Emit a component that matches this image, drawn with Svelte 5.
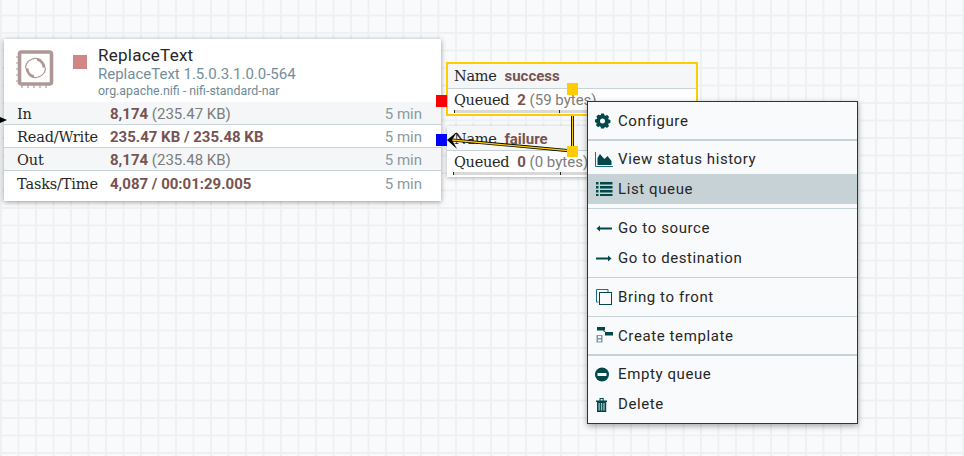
<script>
  const stats = [
    { label: 'In', value: '8,174', extra: '(235.47 KB)' },
    { label: 'Read/Write', value: '235.47 KB / 235.48 KB', extra: '' },
    { label: 'Out', value: '8,174', extra: '(235.48 KB)' },
    { label: 'Tasks/Time', value: '4,087 / 00:01:29.005', extra: '' }
  ];

  const groups = [
    [{ icon: 'gear', text: 'Configure' }],
    [{ icon: 'chart', text: 'View status history' }, { icon: 'list', text: 'List queue', active: true }],
    [{ icon: 'left', text: 'Go to source' }, { icon: 'right', text: 'Go to destination' }],
    [{ icon: 'front', text: 'Bring to front' }],
    [{ icon: 'template', text: 'Create template' }],
    [{ icon: 'empty', text: 'Empty queue' }, { icon: 'trash', text: 'Delete' }]
  ];
</script>

<div class="canvas">
  <section class="processor">
    <header class="proc-head">
      <svg class="proc-icon" width="38" height="42" viewBox="0 0 38 42">
        <rect x="3.500" y="3" width="32" height="32" rx="2" fill="none" stroke="#ad9897" stroke-width="3.600" />
        <path d="M9.500 19a10 10 0 0 1 16-7.500" fill="none" stroke="#ad9897" stroke-width="1.200" />
        <path d="M29.500 19a10 10 0 0 1-16 7.500" fill="none" stroke="#ad9897" stroke-width="1.200" />
        <path d="M21 9.200a10 10 0 0 1 8.500 9.800l-3-.5a7.500 7.500 0 0 0-5.500-6.800z" fill="#ad9897" />
        <path d="M18 28.800a10 10 0 0 1-8.500-9.800l3 .5a7.500 7.500 0 0 0 5.500 6.800z" fill="#ad9897" />
        <path d="M0 8h2M0 14h2M0 20h2M0 26h2M0 32h2M6 36v3M12 36v3M18 36v3M24 36v3M30 36v3" stroke="#ad9897" stroke-width="1.200" />
      </svg>
      <span class="run-state"></span>
      <div class="names">
        <div class="proc-name">ReplaceText</div>
        <div class="proc-type">ReplaceText 1.5.0.3.1.0.0-564</div>
        <div class="proc-bundle">org.apache.nifi - nifi-standard-nar</div>
      </div>
    </header>
    {#each stats as s, i}
      <div class="stat" class:odd={i % 2 === 0}>
        <span class="stat-label">{s.label}</span>
        <span class="stat-value"><b>{s.value}</b>{#if s.extra}&nbsp;<span class="extra">{s.extra}</span>{/if}</span>
        <span class="stat-time">5 min</span>
      </div>
    {/each}
  </section>

  <section class="conn success">
    <div class="conn-row head"><span class="conn-label">Name</span><b>success</b></div>
    <div class="conn-row body">
      <span class="conn-label">Queued</span><b>2</b>&nbsp;<span class="extra">(59 bytes)</span>
      <div class="bars"><i></i><i></i></div>
    </div>
  </section>

  <section class="conn failure">
    <div class="conn-row head"><span class="conn-label">Name</span><b>failure</b></div>
    <div class="conn-row body">
      <span class="conn-label">Queued</span><b>0</b>&nbsp;<span class="extra">(0 bytes)</span>
      <div class="bars"><i></i><i></i></div>
    </div>
  </section>

  <svg class="wires" width="600" height="200" viewBox="0 0 600 200">
    <path d="M572.500 116V151L452 140" fill="none" stroke="#000" stroke-width="3" />
    <path d="M572.500 116V151L452 140" fill="none" stroke="#ffcc00" stroke-width="1.300" />
    <path d="M457 132L447 140L457 149L452 140z" fill="#000" />
    <path d="M0 117L7 120L0 123z" fill="#000" />
    <rect x="436" y="95" width="11" height="12" fill="#ff0000" />
    <rect x="436" y="134" width="11" height="12" fill="#0000ff" />
    <rect x="567" y="83" width="11" height="12" fill="#ffcc00" />
    <rect x="567" y="146" width="11" height="11" fill="#ffcc00" />
  </svg>

  <nav class="menu">
    {#each groups as group, g}
      {#if g > 0}<hr class:thick={g === 1 || g === 5} />{/if}
      {#each group as item}
        <div class="item" class:active={item.active}>
          <svg class="ico" width="18" height="18" viewBox="0 0 18 18">
            {#if item.icon === 'gear'}
              <path fill-rule="evenodd" fill="#004849" d="M6 2h3l.4 1.700 1.100.5 1.500-.9 2.100 2.100-.9 1.500.5 1.100 1.700.4v3l-1.700.4-.5 1.100.9 1.500-2.100 2.100-1.500-.9-1.100.5L9 17H6l-.4-1.700-1.100-.5-1.500.9-2.100-2.100.9-1.500-.5-1.100L0 11V8l1.700-.4.5-1.100-.9-1.500 2.100-2.100 1.500.9 1.100-.5zM7.500 7a2.500 2.500 0 1 0 0 5 2.500 2.500 0 0 0 0-5z" transform="translate(0 -.5)" />
            {:else if item.icon === 'chart'}
              <path d="M.5 2v14.500H18" fill="none" stroke="#1a6d8f" stroke-width="1" />
              <path fill="#004849" d="M2.500 15V8L5 4l2.500 3 2 2 3-3 4 5v4z" />
            {:else if item.icon === 'list'}
              <path fill="#004849" d="M1 3h2.500v2.500H1zM5 3h12.500v2.500H5zM1 7h2.500v2.500H1zM5 7h12.500v2.500H5zM1 11h2.500v2.500H1zM5 11h12.500v2.500H5zM1 15h2.500v2H1zM5 15h12.500v2H5z" transform="translate(0 -1)" />
            {:else if item.icon === 'left'}
              <path fill="#004849" d="M1.500 9.500L5 6.500v2h12v2H5v2z" />
            {:else if item.icon === 'right'}
              <path fill="#004849" d="M16.500 9.500L13 6.500v2H1v2h12v2z" />
            {:else if item.icon === 'front'}
              <path d="M3.500 14H1.500V1.500H13V4" fill="none" stroke="#1a6d8f" stroke-width="1" />
              <rect x="4.500" y="4.500" width="12" height="12" fill="none" stroke="#004849" stroke-width="1" />
            {:else if item.icon === 'template'}
              <rect x="2" y="0" width="8" height="3.500" fill="#004849" />
              <rect x="10" y="5" width="8" height="3.500" fill="#004849" />
              <path d="M8 3.500l3 2" stroke="#004849" stroke-width="0.800" />
              <path fill="#7f98a3" d="M1.500 8h6v7.500h-6z" />
              <path fill="#f9fafb" d="M3 9h3v2H3zM3 12.500h3v2H3z" />
            {:else if item.icon === 'empty'}
              <circle cx="7" cy="9.500" r="7" fill="#004849" />
              <rect x="2.500" y="8" width="9" height="3" fill="#f9fafb" />
            {:else}
              <path fill="#004849" d="M1 5.500h11v1.500h-.8V17H2V7h-1zM4.500 3h4.200v2.500H7.600V4H5.600v1.500H4.500z" />
              <path fill="#a9bcc4" d="M3.500 8h1.300v7.500H3.500zM5.900 8h1.300v7.500H5.900zM8.300 8h1.300v7.500H8.300z" />
            {/if}
          </svg>
          <span>{item.text}</span>
        </div>
      {/each}
    {/each}
  </nav>
</div>

<style>
  :global(body) {
    margin: 0;
  }
  .canvas {
    position: relative;
    width: 964px;
    height: 456px;
    overflow: hidden;
    background-color: #f9fafb;
    background-image:
      linear-gradient(to right, #eef1f3 1.5px, transparent 1.5px),
      linear-gradient(to bottom, #eef1f3 1.5px, transparent 1.5px);
    background-size: 17.5px 17.5px;
    background-position: 0 14.5px;
  }
  b {
    font-family: Roboto, sans-serif;
    font-weight: 700;
    color: #775351;
  }
  .extra {
    font-family: Roboto, sans-serif;
    color: #7c7c7c;
  }
  .processor {
    position: absolute;
    left: 4px;
    top: 39px;
    width: 437px;
    height: 162px;
    background: #fff;
    box-shadow: 0 1px 5px rgba(0, 0, 0, 0.4);
  }
  .proc-head {
    display: flex;
    align-items: flex-start;
    height: 63px;
    box-sizing: border-box;
    padding: 10px 0 0 12px;
  }
  .proc-icon {
    flex: none;
    margin-right: 19px;
  }
  .run-state {
    flex: none;
    width: 14px;
    height: 14px;
    margin: 6px 11px 0 0;
    background: #d18686;
  }
  .names {
    font-family: Roboto, sans-serif;
    margin-top: -4.500px;
  }
  .proc-name {
    font-size: 17px;
    letter-spacing: 0.25px;
    line-height: 20px;
    color: #262626;
  }
  .proc-type {
    font-size: 15px;
    line-height: 18px;
    color: #728e9b;
  }
  .proc-bundle {
    font-size: 12.400px;
    line-height: 15px;
    color: #6f8a96;
  }
  .stat {
    display: flex;
    align-items: center;
    height: 23px;
    padding: 2px 19px 0 13px;
    box-sizing: border-box;
    border-bottom: 1px solid #c7d2d7;
    font-size: 15px;
  }
  .stat:last-child {
    border-bottom: 0;
  }
  .stat.odd {
    background: #f4f6f7;
  }
  .stat-label {
    width: 93px;
    flex: none;
    font-family: "DejaVu Serif", serif;
    font-size: 14.500px;
    letter-spacing: -0.15px;
    color: #262626;
  }
  .stat-value {
    flex: 1;
    font-family: Roboto, sans-serif;
  }
  .stat-time {
    font-family: Roboto, sans-serif;
    color: #8a9aa2;
  }
  .conn {
    position: absolute;
    left: 447px;
    width: 252px;
    background: #fff;
    box-shadow: 0 1px 4px rgba(0, 0, 0, 0.3);
    font-size: 15px;
    box-sizing: border-box;
  }
  .conn.success {
    top: 62px;
    left: 446px;
    height: 54px;
    border: 2px solid #ffcc00;
    box-shadow: none;
  }
  .conn.failure {
    top: 126px;
    height: 51px;
  }
  .conn-row {
    display: flex;
    align-items: center;
    height: 25px;
    padding-left: 6px;
    box-sizing: border-box;
  }
  .failure .conn-row {
    padding-left: 7px;
  }
  .failure .conn-row.head {
    padding-top: 2px;
  }
  .conn-row.head {
    background: #f4f6f7;
    border-bottom: 1px solid #c7d2d7;
  }
  .conn-row.body {
    position: relative;
    padding-bottom: 3px;
  }
  .conn-label {
    font-family: "DejaVu Serif", serif;
    font-size: 14.500px;
    letter-spacing: -0.3px;
    color: #262626;
    margin-right: 8px;
  }
  .bars {
    position: absolute;
    left: 6px;
    right: 33px;
    top: 21px;
    display: flex;
  }
  .bars i {
    flex: 1;
    height: 3px;
    background: #d9d9d9;
    border-left: 1px solid #262626;
  }
  .wires {
    position: absolute;
    left: 0;
    top: 0;
    pointer-events: none;
  }
  .menu {
    position: absolute;
    left: 587px;
    top: 101px;
    width: 271px;
    height: 323px;
    box-sizing: border-box;
    padding: 4px 0;
    border: 1px solid #004849;
    background: #f9fafb;
    box-shadow: 0 2px 6px rgba(0, 0, 0, 0.35);
    font-family: Roboto, sans-serif;
    font-size: 15px;
    letter-spacing: 0.6px;
    color: #262626;
  }
  .item {
    display: flex;
    align-items: center;
    height: 30px;
    padding-left: 7px;
    box-sizing: border-box;
  }
  .item.active {
    background: #c7d2d7;
  }
  .ico {
    flex: none;
    margin-right: 5px;
  }
  hr {
    border: 0;
    height: 1px;
    margin: 4px 0;
    background: #c7d2d7;
  }
  hr.thick {
    height: 2px;
    margin: 3px 0;
  }
</style>
